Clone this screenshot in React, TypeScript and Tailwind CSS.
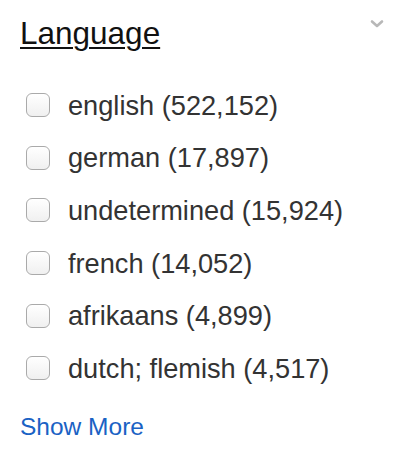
import React from "react";

const items = [
  "english (522,152)",
  "german (17,897)",
  "undetermined (15,924)",
  "french (14,052)",
  "afrikaans (4,899)",
  "dutch; flemish (4,517)",
];

export default function App() {
  return (
    <div
      className="w-[416px] h-[454px] bg-white pl-[20px] pr-[32px] pt-[15px]"
      style={{ fontFamily: '"Liberation Sans", Arial, Helvetica, sans-serif' }}
    >
      <div className="flex justify-between items-start">
        <h2 className="text-[31.5px] leading-[36px] text-[#111] underline underline-offset-[3px] decoration-[1.5px]">
          Language
        </h2>
        <svg width="14" height="10" viewBox="0 0 14 10" className="mt-[4px]">
          <path d="M2 2.5 L7 7 L12 2.5" fill="none" stroke="#b8b8b8" strokeWidth="2.6" strokeLinecap="round" strokeLinejoin="round" />
        </svg>
      </div>
      <ul className="mt-[28px]">
        {items.map((t) => (
          <li key={t} className="flex items-center h-[52.6px]">
            <span className="ml-[6px] w-[24px] h-[24px] rounded-[6px] border border-[#aaaaaa] bg-gradient-to-b from-white to-[#f0f0f0] shrink-0" />
            <span className="ml-[18px] text-[27.2px] leading-[31px] text-[#333]">{t}</span>
          </li>
        ))}
      </ul>
      <div className="mt-[18px] text-[24.5px] leading-[28px] text-[#1a62c4]">Show More</div>
    </div>
  );
}
